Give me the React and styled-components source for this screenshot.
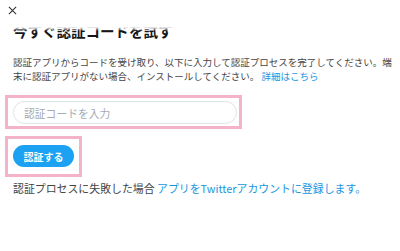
import React from 'react';
import styled, { createGlobalStyle } from 'styled-components';

const GlobalStyle = createGlobalStyle`
  html, body {
    margin: 0;
    padding: 0;
    background: #fff;
  }
  body {
    font-family: "Noto Sans CJK JP", "Noto Sans", sans-serif;
    color: #333;
  }
`;

const Page = styled.div`
  position: relative;
  width: 400px;
  height: 251px;
  overflow: hidden;
  background: #fff;
`;

const Header = styled.div`
  position: absolute;
  top: 0;
  left: 0;
  right: 0;
  height: 31px;
  background: linear-gradient(to bottom, #fff 0, #fff 27px, rgba(255, 255, 255, 0) 31px);
  z-index: 2;
`;

const Close = styled.button`
  position: absolute;
  top: 3px;
  left: 5px;
  width: 14px;
  height: 14px;
  padding: 0;
  border: none;
  background: none;
  display: flex;
  align-items: center;
  justify-content: center;
  cursor: pointer;
`;

const Content = styled.div`
  padding: 21px 4px 0 13px;
`;

const Title = styled.h2`
  margin: 0;
  font-size: 14.5px;
  line-height: 20px;
  font-weight: 700;
  color: #14171a;
`;

const Text = styled.p`
  margin: 14px 0 0;
  font-size: 9.5px;
  line-height: 14px;
  color: #444;
`;

const Link = styled.a`
  color: #1b95e0;
  text-decoration: none;
  cursor: pointer;
`;

const Highlight = styled.div`
  box-sizing: border-box;
  margin-left: -8px;
  border: 3px solid #f5b3ca;
  width: ${(p) => p.$w}px;
  padding: ${(p) => p.$pad};
`;

const InputBox = styled.input`
  box-sizing: border-box;
  display: block;
  width: 100%;
  height: 23px;
  margin: 0;
  padding: 0 10px;
  border: 1px solid #dfe4e8;
  border-radius: 12px;
  font-family: inherit;
  font-size: 10.8px;
  color: #14171a;
  outline: none;
  background: #fff;
  &::placeholder {
    color: #a3acb4;
  }
`;

const Button = styled.button`
  display: block;
  width: 61px;
  height: 22px;
  padding: 0;
  border: none;
  border-radius: 11px;
  background: #1da1f2;
  color: #fff;
  font-family: inherit;
  font-size: 10px;
  font-weight: 700;
  cursor: pointer;
`;

const Footer = styled.p`
  margin: 4px 0 0;
  font-size: 10.9px;
  line-height: 14px;
  color: #444;
`;

export default function App() {
  return (
    <Page>
      <GlobalStyle />
      <Header>
        <Close aria-label="閉じる">
          <svg width="9" height="9" viewBox="0 0 10 10">
            <path d="M1 1L9 9M9 1L1 9" stroke="#333" strokeWidth="1.2" fill="none" />
          </svg>
        </Close>
      </Header>
      <Content>
        <Title>今すぐ認証コードを試す</Title>
        <Text>
          認証アプリからコードを受け取り、以下に入力して認証プロセスを完了してください。端末に認証アプリがない場合、インストールしてください。 <Link>詳細はこちら</Link>
        </Text>
        <Highlight $w={237} $pad="3px 2px 2px 5px" style={{ marginTop: 12 }}>
          <InputBox placeholder="認証コードを入力" />
        </Highlight>
        <Highlight $w={77} $pad="6px 5px 7px 5px" style={{ marginTop: 7 }}>
          <Button>認証する</Button>
        </Highlight>
        <Footer>
          認証プロセスに失敗した場合 <Link>アプリをTwitterアカウントに登録します。</Link>
        </Footer>
      </Content>
    </Page>
  );
}
